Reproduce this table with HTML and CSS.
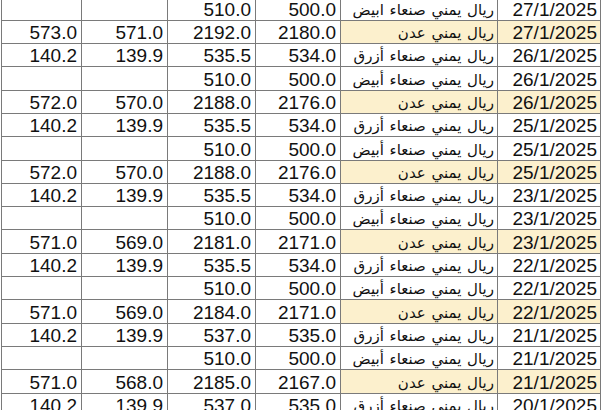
FILE: index.html
```html
<!DOCTYPE html>
<html>
<head>
<meta charset="utf-8">
<link rel="stylesheet" href="styles.css">
</head>
<body>
<div class="sheet">
<table class="grid">
<colgroup>
<col class="c1"><col class="c2"><col class="c3"><col class="c4"><col class="c5"><col class="c6">
</colgroup>
<tbody>
<tr><td></td><td></td><td>510.0</td><td>500.0</td><td class="ar">ريال يمني صنعاء ابيض</td><td class="dt">27/1/2025</td></tr>
<tr><td>573.0</td><td>571.0</td><td>2192.0</td><td>2180.0</td><td class="ar hl">ريال يمني عدن</td><td class="dt hl">27/1/2025</td></tr>
<tr><td>140.2</td><td>139.9</td><td>535.5</td><td>534.0</td><td class="ar">ريال يمني صنعاء أزرق</td><td class="dt">26/1/2025</td></tr>
<tr><td></td><td></td><td>510.0</td><td>500.0</td><td class="ar">ريال يمني صنعاء أبيض</td><td class="dt">26/1/2025</td></tr>
<tr><td>572.0</td><td>570.0</td><td>2188.0</td><td>2176.0</td><td class="ar hl">ريال يمني عدن</td><td class="dt hl">26/1/2025</td></tr>
<tr><td>140.2</td><td>139.9</td><td>535.5</td><td>534.0</td><td class="ar">ريال يمني صنعاء أزرق</td><td class="dt">25/1/2025</td></tr>
<tr><td></td><td></td><td>510.0</td><td>500.0</td><td class="ar">ريال يمني صنعاء أبيض</td><td class="dt">25/1/2025</td></tr>
<tr><td>572.0</td><td>570.0</td><td>2188.0</td><td>2176.0</td><td class="ar hl">ريال يمني عدن</td><td class="dt hl">25/1/2025</td></tr>
<tr><td>140.2</td><td>139.9</td><td>535.5</td><td>534.0</td><td class="ar">ريال يمني صنعاء أزرق</td><td class="dt">23/1/2025</td></tr>
<tr><td></td><td></td><td>510.0</td><td>500.0</td><td class="ar">ريال يمني صنعاء أبيض</td><td class="dt">23/1/2025</td></tr>
<tr><td>571.0</td><td>569.0</td><td>2181.0</td><td>2171.0</td><td class="ar hl">ريال يمني عدن</td><td class="dt hl">23/1/2025</td></tr>
<tr><td>140.2</td><td>139.9</td><td>535.5</td><td>534.0</td><td class="ar">ريال يمني صنعاء أزرق</td><td class="dt">22/1/2025</td></tr>
<tr><td></td><td></td><td>510.0</td><td>500.0</td><td class="ar">ريال يمني صنعاء أبيض</td><td class="dt">22/1/2025</td></tr>
<tr><td>571.0</td><td>569.0</td><td>2184.0</td><td>2171.0</td><td class="ar hl">ريال يمني عدن</td><td class="dt hl">22/1/2025</td></tr>
<tr><td>140.2</td><td>139.9</td><td>537.0</td><td>535.0</td><td class="ar">ريال يمني صنعاء أزرق</td><td class="dt">21/1/2025</td></tr>
<tr><td></td><td></td><td>510.0</td><td>500.0</td><td class="ar">ريال يمني صنعاء أبيض</td><td class="dt">21/1/2025</td></tr>
<tr><td>571.0</td><td>568.0</td><td>2185.0</td><td>2167.0</td><td class="ar hl">ريال يمني عدن</td><td class="dt hl">21/1/2025</td></tr>
<tr><td>140.2</td><td>139.9</td><td>537.0</td><td>535.0</td><td class="ar">ريال يمني صنعاء أزرق</td><td class="dt">20/1/2025</td></tr>
</tbody>
</table>
</div>
</body>
</html>
```
FILE: styles.css
```css
html, body {
  margin: 0;
  padding: 0;
  background: #ffffff;
  overflow: hidden;
}
.sheet {
  width: 604px;
  height: 410px;
  overflow: hidden;
}
.grid {
  border-collapse: collapse;
  table-layout: fixed;
  width: 599px;
  margin-top: -3.5px;
  margin-left: 1px;
  font-family: "Liberation Sans", Arial, sans-serif;
  font-size: 19px;
  color: #111111;
}
.c1 { width: 80px; }
.c2 { width: 86px; }
.c3 { width: 88px; }
.c4 { width: 85px; }
.c5 { width: 157px; }
.c6 { width: 103px; }
.grid td {
  border: 1.5px solid #7a7a7a;
  height: 22.3px;
  padding: 0 4px 0 0;
  text-align: right;
  vertical-align: bottom;
  line-height: 20px;
  white-space: nowrap;
  overflow: hidden;
}
.grid td.ar {
  direction: rtl;
  text-align: right;
  padding: 0 3px 0 0;
  font-family: "DejaVu Sans", sans-serif;
  font-size: 15px;
  word-spacing: 1px;
  line-height: 20px;
}
.grid td.dt {
  padding-right: 3px;
}
.grid td.hl {
  background: #fcf0cd;
}
```
